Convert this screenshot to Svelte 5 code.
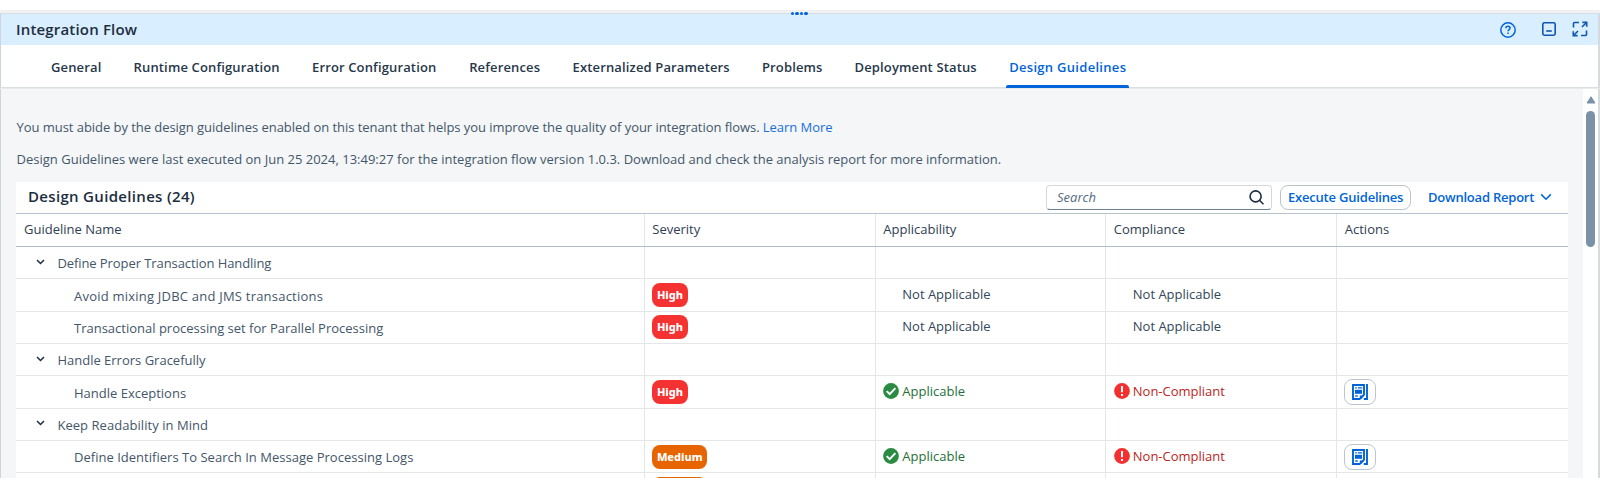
<script>
  const tabs = [
    { label: 'General', w: 50.6 },
    { label: 'Runtime Configuration', w: 146.4 },
    { label: 'Error Configuration', w: 125.2 },
    { label: 'References', w: 71.4 },
    { label: 'Externalized Parameters', w: 157.4 },
    { label: 'Problems', w: 60.6 },
    { label: 'Deployment Status', w: 122.6 },
    { label: 'Design Guidelines', w: 117, active: true }
  ];
  const rows = [
    { group: true, name: 'Define Proper Transaction Handling', tracking: -0.08 },
    { name: 'Avoid mixing JDBC and JMS transactions', severity: 'High', tracking: 0.22 },
    { name: 'Transactional processing set for Parallel Processing', severity: 'High' },
    { group: true, name: 'Handle Errors Gracefully' },
    { name: 'Handle Exceptions', severity: 'High', applicable: true },
    { group: true, name: 'Keep Readability in Mind', tracking: 0.05 },
    { name: 'Define Identifiers To Search In Message Processing Logs', severity: 'Medium', applicable: true, tracking: 0.02 },
    { name: '', severity: 'medium', clipped: true }
  ];
</script>

<div class="panel">
  <div class="splitter"><span class="grip"><i></i><i></i><i></i><i></i></span></div>
  <header>
    <h1>Integration Flow</h1>
    <div class="tools">
      <svg class="help" width="16" height="16" viewBox="0 0 16 16" fill="none" stroke="#0064d9" stroke-width="1.5"><circle cx="8" cy="8" r="7.2"/><path d="M5.9 6.3c0-1.4.9-2.1 2.1-2.1s2.1.8 2.1 1.9c0 1.5-2 1.6-2 3.1"/><path d="M8.1 10.5v1.6"/></svg>
      <svg class="min" width="14" height="14" viewBox="0 0 14 14" fill="none" stroke="#1156b0" stroke-width="1.6"><rect x=".8" y=".8" width="12.4" height="12.4" rx="1.6"/><path d="M4.2 9h5.6"/></svg>
      <svg class="full" width="16" height="16" viewBox="0 0 16 16" fill="none" stroke="#1156b0" stroke-width="1.6"><path d="M1.5 6.5V2.4q0-.9.9-.9H7M14.5 9.5v4.1q0 .9-.9.9H9M10 6l4-4M6 10l-4 4"/><path d="M10.4 1.4h4.3v4.3M1.3 10.3v4.3h4.3"/></svg>
    </div>
  </header>
  <nav>
    {#each tabs as t}
      <div class="tab" class:active={t.active} style="width:{t.w}px"><span>{t.label}</span></div>
    {/each}
  </nav>
  <div class="body">
    <main>
      <p class="intro">You must abide by the design guidelines enabled on this tenant that helps you improve the quality of your integration flows. <a href="#learn">Learn More</a></p>
      <p class="executed">Design Guidelines were last executed on Jun 25 2024, 13:49:27 for the integration flow version 1.0.3. Download and check the analysis report for more information.</p>
      <section>
        <div class="toolbar">
          <h2>Design Guidelines (24)</h2>
          <div class="search"><em>Search</em><svg width="15" height="15" viewBox="0 0 15 15" fill="none" stroke="#1d2d3e" stroke-width="1.6"><circle cx="6.6" cy="6.4" r="5.5"/><path d="M10.5 10.3l4 4"/></svg></div>
          <div class="execute"><span>Execute Guidelines</span></div>
          <div class="download"><span>Download Report</span><svg width="12" height="8" viewBox="0 0 12 8" fill="none" stroke="#0064d9" stroke-width="1.6"><path d="M1.2 1.4L6 6.2l4.8-4.8"/></svg></div>
        </div>
        <div class="row head"><div>Guideline Name</div><div>Severity</div><div>Applicability</div><div>Compliance</div><div>Actions</div></div>
        {#each rows as r}
          <div class="row">
            <div class="name" class:group={r.group}>
              {#if r.group}<svg width="9" height="6" viewBox="0 0 9 6" fill="none" stroke="#1d2d3e" stroke-width="1.5"><path d="M1 1l3.5 3.5L8 1"/></svg>{/if}
              <span style="letter-spacing:{r.tracking ?? 0}px">{r.name}</span>
            </div>
            <div>{#if r.clipped}<b class="badge medium next"></b>{:else if r.severity}<b class="badge {r.severity.toLowerCase()}">{r.severity}</b>{/if}</div>
            <div class="status">
              {#if r.applicable}
                <svg width="16" height="16" viewBox="0 0 16 16"><circle cx="8" cy="8" r="7.9" fill="#2a8b43"/><path d="M3.7 8.1l3 3 5.7-6" fill="none" stroke="#fff" stroke-width="2"/></svg><span class="good">Applicable</span>
              {:else if r.severity && !r.clipped}<span class="none">Not Applicable</span>{/if}
            </div>
            <div class="status">
              {#if r.applicable}
                <svg width="16" height="16" viewBox="0 0 16 16"><circle cx="8" cy="8" r="7.9" fill="#f42f2f"/><path d="M8 3v6.2M8 10.9v2" fill="none" stroke="#fff" stroke-width="2"/></svg><span class="bad">Non-Compliant</span>
              {:else if r.severity && !r.clipped}<span class="none">Not Applicable</span>{/if}
            </div>
            <div class="act">
              {#if r.applicable}
                <span class="action"><svg width="16" height="16" viewBox="0 0 16 16" fill="none" stroke="#0064d9" stroke-width="1.9"><path d="M8 15H1V1h11v9.6L8 15"/><path d="M15 0v15h-3.2"/><path d="M3.2 3.9h1.6M5.8 3.9h4.4" stroke-width="1.3"/><path d="M3 5.8h7v4H3z" fill="#0064d9" stroke="none"/><path d="M3.2 12h2.6" stroke-width="1.4"/><path d="M7.8 15.5v-4h4.6z" fill="#0064d9" stroke="none"/></svg></span>
              {/if}
            </div>
          </div>
        {/each}
      </section>
    </main>
    <aside><svg width="10" height="8" viewBox="0 0 10 8"><path d="M5 .8L9 7H1z" fill="#7b91a8" stroke="#7b91a8" stroke-linejoin="round"/></svg><div class="thumb"></div></aside>
  </div>
</div>

<style>
  :global(body) { margin: 0; background: #fff; }
  .panel { box-sizing: border-box; width: 1600px; height: 478px; padding-top: 10px; overflow: hidden; display: flex; flex-direction: column; font: 13px/20px "Open Sans", "Noto Sans", sans-serif; color: #1d2d3e; background: #fff; white-space: nowrap; }
  .splitter { flex: none; position: relative; height: 3px; background: #eff1f2; border-bottom: 1px solid #d9dddf; }
  .grip { position: absolute; left: 791px; top: 2px; display: flex; gap: 1.3px; }
  .grip i { width: 3.2px; height: 3px; border-radius: 1.5px; background: #0064d9; }
  header { flex: none; height: 31px; background: #d9eeff; border-left: 1px solid #cdd5db; border-right: 2px solid #d5dade; display: flex; align-items: center; justify-content: space-between; box-sizing: border-box; padding: 0 10px 0 15px; }
  h1, h2 { margin: 0; font-size: 15px; font-weight: 600; }
  h1 { letter-spacing: .17px; padding-bottom: 1px; }
  .tools { display: flex; align-items: center; }
  .min { margin: 0 16px 2px 26px; }
  .full { margin-bottom: 2px; }
  nav { flex: none; box-sizing: border-box; height: 43px; display: flex; gap: 32px; padding-left: 50px; border-left: 1px solid #cdd5db; border-right: 2px solid #d5dade; border-bottom: 1px solid #dcdfe2; box-shadow: 0 1px 0 #e8eaec; position: relative; }
  .tab { font-weight: 650; line-height: 44px; position: relative; color: #26374a; letter-spacing: .14px; }
  .active { color: #0064d9; letter-spacing: .3px; }
  .active::after { content: ""; position: absolute; left: -3px; right: -3px; bottom: -1px; height: 3px; background: #0064d9; border-radius: 2px 2px 0 0; }
  .body { flex: 1; min-height: 0; display: flex; border-left: 1px solid #cdd5db; border-right: 2px solid #d5dade; background: #f4f6f8; }
  main { flex: 1; padding: 29px 15px 0 15px; }
  p { margin: 0; height: 20px; color: #44566a; padding-left: .6px; }
  .intro { letter-spacing: -.052px; }
  .executed { margin-top: 12px; }
  a { color: #1a6fdc; text-decoration: none; }
  section { margin-top: 13px; background: #fff; }
  .toolbar { height: 32px; display: flex; align-items: center; border-bottom: 1px solid #b9c3cd; padding-left: 12px; box-sizing: border-box; }
  h2 { flex: 1; padding-bottom: 3px; letter-spacing: .32px; }
  .search { box-sizing: border-box; width: 226px; height: 25px; border: 1px solid #d3d9df; border-bottom-color: #6b7f95; border-radius: 4px; display: flex; justify-content: space-between; align-items: center; padding: 0 7px 0 10px; color: #556b82; margin-right: 8px; margin-bottom: 1px; }
  .execute { box-sizing: border-box; width: 131px; height: 25px; border: 1px solid #bcc3ca; border-radius: 8px; padding-left: 7px; line-height: 23px; font-weight: 600; letter-spacing: -.2px; color: #0064d9; margin: 0 17px 1px 0; }
  .download { width: 140px; display: flex; align-items: center; justify-content: space-between; box-sizing: border-box; padding: 0 16px 1px 0; font-weight: 600; letter-spacing: -.22px; color: #0064d9; }
  .row { display: grid; grid-template-columns: 627.7px 231px 230.5px 231px 1fr; height: 32.35px; box-sizing: border-box; border-bottom: 1px solid #e5e6e7; }
  .row > div { display: flex; align-items: center; padding-left: 7.6px; border-left: 1px solid #e5e6e7; }
  .row > div:first-child { border-left: 0; padding-left: 8px; }
  .row.head { height: 33px; border-bottom-color: #b0bcc8; color: #2f4053; }
  .row.head > div { padding-bottom: 2px; }
  .row > .name:first-child { color: #44566a; padding: 1px 0 0 58px; }
  .row > .group:first-child { padding-left: 20px; }
  .group svg { margin: 0 12.4px 3px 0; }
  .badge { height: 24px; box-sizing: border-box; border-radius: 8px; padding: 0 4.6px; font: 800 11px/24px "Noto Sans", "Open Sans", sans-serif; color: #fff; }
  .high { background: #f53232; }
  .medium { background: #e76500; }
  .next { width: 55px; }
  .row > .status { gap: 3px; padding-bottom: 2px; }
  .none { margin-left: 19px; color: #33465a; }
  .good { color: #256f3a; }
  .bad { color: #ba2626; }
  .row > .act { padding-left: 7px; }
  .action { box-sizing: border-box; width: 32px; height: 26px; border: 1px solid #bcc6d0; border-radius: 8px; display: flex; align-items: center; justify-content: center; }
  aside { width: 15px; background: #fff; display: flex; flex-direction: column; align-items: center; padding-top: 8px; }
  .thumb { width: 9px; height: 136px; margin-top: 7px; border-radius: 5px; background: #7b91a8; }
</style>
